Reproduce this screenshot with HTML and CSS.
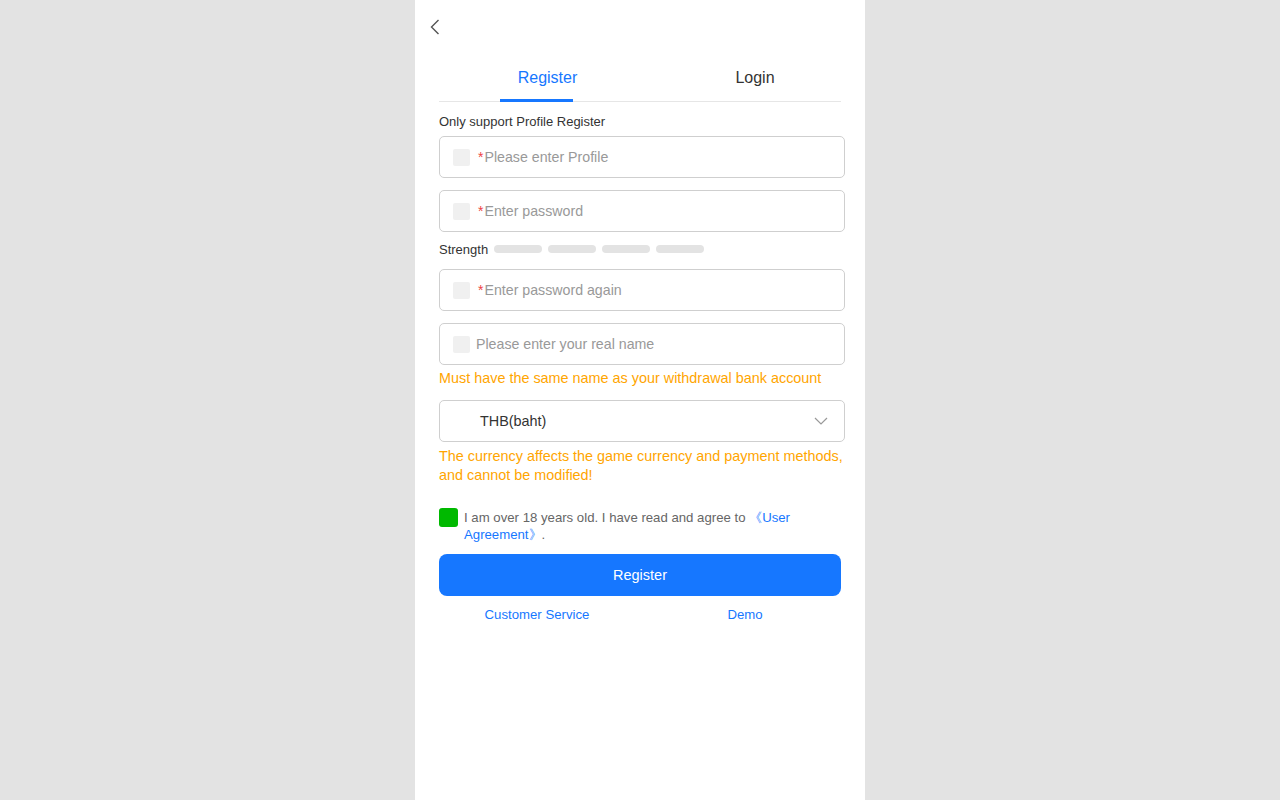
FILE: index.html
```html
<!DOCTYPE html>
<html lang="en">
<head>
<meta charset="utf-8">
<title>Register</title>
<link rel="stylesheet" href="styles.css">
</head>
<body>
<div class="page">
  <div class="top">
    <svg class="back" width="12" height="16" viewBox="0 0 12 16"><path d="M9.5 1 L2.5 8 L9.5 15" fill="none" stroke="#555" stroke-width="1.4"/></svg>
  </div>
  <div class="content">
    <div class="tabs">
      <div class="tab active"><span class="tab-text t1">Register</span><span class="ink"></span></div>
      <div class="tab"><span class="tab-text t2">Login</span></div>
    </div>
    <div class="label">Only support Profile Register</div>
    <div class="field f-first"><span class="ico"></span><span class="req">*</span><span class="ph">Please enter Profile</span></div>
    <div class="field"><span class="ico"></span><span class="req">*</span><span class="ph">Enter password</span></div>
    <div class="strength"><span class="s-label">Strength</span><span class="bar"></span><span class="bar"></span><span class="bar"></span><span class="bar"></span></div>
    <div class="field f-third"><span class="ico"></span><span class="req">*</span><span class="ph">Enter password again</span></div>
    <div class="field"><span class="ico"></span><span class="ph ph-gap">Please enter your real name</span></div>
    <div class="note note1">Must have the same name as your withdrawal bank account</div>
    <div class="field select"><span class="sel-text">THB(baht)</span>
      <svg class="caret" width="14" height="8" viewBox="0 0 14 8"><path d="M1 1 L7 7 L13 1" fill="none" stroke="#999" stroke-width="1.2"/></svg>
    </div>
    <div class="note note2">The currency affects the game currency and payment methods, and cannot be modified!</div>
    <div class="agree"><span class="check"></span><p class="agree-text">I am over 18 years old. I have read and agree to <a class="link">《User Agreement》</a>.</p></div>
    <button class="btn">Register</button>
    <div class="links"><a class="link l1">Customer Service</a><a class="link l2">Demo</a></div>
  </div>
</div>
</body>
</html>
```
FILE: styles.css
```css
html, body { margin: 0; padding: 0; }
body {
  background: #e3e3e3;
  font-family: "Liberation Sans", Arial, sans-serif;
  color: #333;
}
.page {
  width: 450px;
  min-height: 800px;
  margin: 0 auto;
  background: #fff;
}
.top {
  height: 54px;
  display: flex;
  align-items: center;
  padding-left: 14px;
}
.back { display: block; }
.content { padding: 0 20px 0 24px; }
.tabs {
  width: 402px;
  height: 47px;
  display: flex;
  border-bottom: 1px solid #e6e6e6;
}
.tab {
  flex: 1;
  display: flex;
  align-items: center;
  justify-content: center;
  font-size: 16px;
  color: #333;
  position: relative;
}
.tab.active { color: #1677ff; }
.t1 { padding-left: 16px; }
.t2 { padding-left: 29px; }
.ink {
  position: absolute;
  left: 61px;
  bottom: -1px;
  width: 73px;
  height: 3px;
  background: #1677ff;
}
.label {
  margin-top: 10px;
  font-size: 13px;
  line-height: 20px;
  color: #333;
}
.field {
  box-sizing: border-box;
  width: 406px;
  height: 42px;
  margin-top: 12px;
  border: 1px solid #cfcfcf;
  border-radius: 5px;
  display: flex;
  align-items: center;
  padding-left: 13px;
  font-size: 14.2px;
}
.f-first { margin-top: 4px; }
.f-third { margin-top: 11px; }
.ico {
  width: 17px;
  height: 17px;
  background: #f0f0f0;
  border-radius: 2px;
  flex: none;
}
.req { color: #ee4444; margin-left: 8px; margin-right: 1px; font-size: 14px; }
.ph { color: #999; }
.ph-gap { margin-left: 6px; }
.strength {
  margin-top: 8px;
  height: 18px;
  display: flex;
  align-items: center;
  font-size: 13px;
  color: #333;
}
.s-label { margin-right: 6px; }
.bar {
  width: 48px;
  height: 8px;
  border-radius: 4px;
  background: #e3e3e3;
  margin-right: 6px;
}
.note {
  font-size: 14.4px;
  color: #ffa500;
}
.note1 { margin-top: 3px; line-height: 20px; }
.note2 { margin-top: 5px; line-height: 19px; }
.select { padding-left: 40px; padding-right: 16px; justify-content: space-between; }
.sel-text { color: #333; font-size: 14.4px; }
.caret { display: block; }
.agree {
  margin-top: 23px;
  display: flex;
  align-items: flex-start;
}
.check {
  flex: none;
  width: 19px;
  height: 19px;
  border-radius: 3px;
  background: #00b900;
  margin-right: 6px;
}
.agree-text {
  margin: 0;
  font-size: 13.2px;
  line-height: 17px;
  color: #666;
  padding-top: 1px;
  width: 345px;
}
.link { color: #1677ff; text-decoration: none; font-size: 13.2px; }
.btn {
  display: block;
  width: 402px;
  height: 42px;
  margin-top: 11px;
  border: none;
  border-radius: 8px;
  background: #1677ff;
  color: #fff;
  font-family: "Liberation Sans", Arial, sans-serif;
  font-size: 14.5px;
}
.links {
  margin-top: 10px;
  width: 406px;
  display: flex;
  line-height: 18px;
}
.links .link { flex: 1; text-align: center; }
.l1 { padding-right: 12px; }
.l2 { padding-right: 2px; }
```
